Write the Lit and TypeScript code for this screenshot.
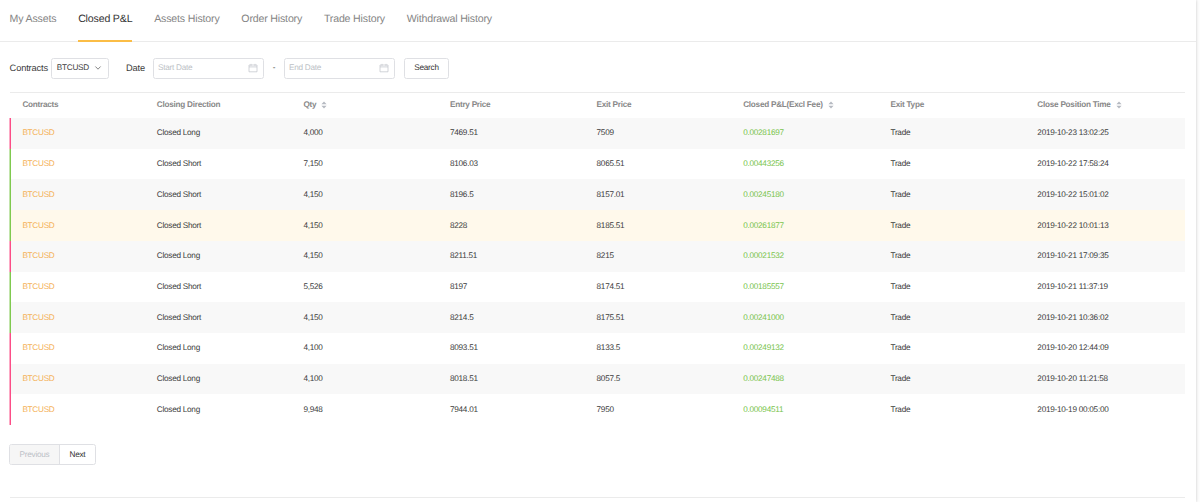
import { LitElement, html, css, svg } from "lit";
import { customElement } from "lit/decorators.js";
import { classMap } from "lit/directives/class-map.js";

interface Trade {
  side: "Long" | "Short";
  qty: string;
  entry: string;
  exit: string;
  pnl: string;
  time: string;
}

const trades: Trade[] = [
  { side: "Long", qty: "4,000", entry: "7469.51", exit: "7509", pnl: "0.00281697", time: "2019-10-23 13:02:25" },
  { side: "Short", qty: "7,150", entry: "8106.03", exit: "8065.51", pnl: "0.00443256", time: "2019-10-22 17:58:24" },
  { side: "Short", qty: "4,150", entry: "8196.5", exit: "8157.01", pnl: "0.00245180", time: "2019-10-22 15:01:02" },
  { side: "Short", qty: "4,150", entry: "8228", exit: "8185.51", pnl: "0.00261877", time: "2019-10-22 10:01:13" },
  { side: "Long", qty: "4,150", entry: "8211.51", exit: "8215", pnl: "0.00021532", time: "2019-10-21 17:09:35" },
  { side: "Short", qty: "5,526", entry: "8197", exit: "8174.51", pnl: "0.00185557", time: "2019-10-21 11:37:19" },
  { side: "Short", qty: "4,150", entry: "8214.5", exit: "8175.51", pnl: "0.00241000", time: "2019-10-21 10:36:02" },
  { side: "Long", qty: "4,100", entry: "8093.51", exit: "8133.5", pnl: "0.00249132", time: "2019-10-20 12:44:09" },
  { side: "Long", qty: "4,100", entry: "8018.51", exit: "8057.5", pnl: "0.00247488", time: "2019-10-20 11:21:58" },
  { side: "Long", qty: "9,948", entry: "7944.01", exit: "7950", pnl: "0.00094511", time: "2019-10-19 00:05:00" },
];

const tabs = ["My Assets", "Closed P&L", "Assets History", "Order History", "Trade History", "Withdrawal History"];

const columns = [
  { label: "Contracts" },
  { label: "Closing Direction" },
  { label: "Qty", sortable: true },
  { label: "Entry Price" },
  { label: "Exit Price" },
  { label: "Closed P&L(Excl Fee)", sortable: true },
  { label: "Exit Type" },
  { label: "Close Position Time", sortable: true },
];

const calendar = html`<svg class="calendar" viewBox="0 0 10 10">
  ${svg`<path d="M1 2H9V8.8H1ZM1 3.9H9M3 0.9V2.8M7 0.9V2.8" fill="none" stroke="#c3c6cc" stroke-width="0.75"/>`}
</svg>`;

const sorter = html`<svg class="sorter" viewBox="0 0 6 8">
  ${svg`<path d="M0.4 3.2L3 0.5L5.6 3.2ZM0.4 4.8L3 7.5L5.6 4.8Z" fill="#b6bac2"/>`}
</svg>`;

@customElement("app-root")
export class AppRoot extends LitElement {
  static styles = css`
    :host {
      display: block;
      width: 1200px;
      height: 502px;
      overflow: hidden;
      background: #fdfdfd;
      font: 8.2px/12px "Liberation Sans", Arial, sans-serif;
      letter-spacing: -0.255px;
      color: #3c3c3c;
      text-rendering: geometricPrecision;
    }
    * { box-sizing: border-box; }
    .page {
      width: 1196px;
      height: 502px;
      background: #fff;
      box-shadow: 0 0 3px rgba(0, 0, 0, 0.22);
    }
    .tabs {
      display: flex;
      gap: 21.8px;
      height: 42px;
      padding-left: 9.6px;
      border-bottom: 1px solid #ebebeb;
      font-size: 10.6px;
      letter-spacing: -0.17px;
      color: #858585;
    }
    .tab {
      height: 42px;
      line-height: 39px;
      white-space: nowrap;
    }
    .tab.active {
      color: #333;
      border-bottom: 2px solid #fbbd46;
    }
    .content {
      padding: 15.5px 11px 0 9.6px;
    }
    .filters {
      display: flex;
      align-items: center;
      height: 21px;
    }
    .label { font-size: 9.3px; letter-spacing: -0.16px; }
    .contracts { width: 41.4px; }
    .date { margin-left: 17px; width: 27px; }
    .control {
      display: flex;
      align-items: center;
      justify-content: space-between;
      height: 21px;
      padding: 0 4.8px;
      border: 1px solid #dfe0e4;
      border-radius: 2.5px;
      background: #fff;
    }
    .select { width: 58px; padding-right: 6px; }
    .chevron { width: 8px; height: 6px; }
    .input { width: 111px; color: #bcbfc6; padding-left: 4px; }
    .calendar { width: 10px; height: 10px; }
    .dash { width: 20px; text-align: center; }
    .button { width: 45px; margin-left: 9px; justify-content: center; color: #333; }
    .table {
      margin-top: 13px;
      border-top: 1px solid #ebebeb;
    }
    .row {
      display: grid;
      grid-template-columns: 134.4px repeat(4, 146.6px) 147.3px 146.9px 1fr;
      align-items: center;
      height: 30.72px;
      padding-left: 11.8px;
      border-left: 1px solid #fc4d87;
      box-shadow: -1px 0 #fda9c5;
      white-space: nowrap;
    }
    .row.short { border-left-color: #7fc94f; box-shadow: -1px 0 #c2e5ab; }
    .row.striped { background: #f8f8f8; }
    .row.hovered { background: #fff9eb; }
    .row.head {
      height: 25.5px;
      border-left-color: transparent;
      box-shadow: none;
      font-weight: bold;
      color: #888;
    }
    .heading { display: flex; align-items: center; gap: 5px; }
    .sorter { width: 6px; height: 8px; }
    .contract { color: #f4b056; }
    .profit { color: #78c44c; }
    .pager {
      display: flex;
      width: 87px;
      height: 21px;
      margin-top: 18.7px;
      margin-left: -0.6px;
      border: 1px solid #dfe0e4;
      border-radius: 2.5px;
      line-height: 19px;
      text-align: center;
      overflow: hidden;
    }
    .previous {
      width: 50px;
      color: #bcbfc6;
      background: #f6f6f6;
      border-right: 1px solid #dfe0e4;
    }
    .next { flex: 1; color: #333; }
    .rule { height: 1px; margin-top: 32px; background: #ebebeb; }
  `;

  render() {
    return html`
      <main class="page">
        <nav class="tabs">
          ${tabs.map((t, i) => html`<span class=${classMap({ tab: true, active: i === 1 })}>${t}</span>`)}
        </nav>
        <section class="content">
          <div class="filters">
            <span class="label contracts">Contracts</span>
            <div class="control select">
              <span>BTCUSD</span>
              <svg class="chevron" viewBox="0 0 8 6">
                <path d="M1.4 1.5L4 4.2L6.6 1.5" fill="none" stroke="#777" stroke-width="0.9" />
              </svg>
            </div>
            <span class="label date">Date</span>
            <div class="control input"><span>Start Date</span>${calendar}</div>
            <span class="dash">-</span>
            <div class="control input"><span>End Date</span>${calendar}</div>
            <div class="control button">Search</div>
          </div>
          <div class="table">
            <div class="row head">
              ${columns.map((c) => html`<span class="heading"><span>${c.label}</span>${c.sortable ? sorter : ""}</span>`)}
            </div>
            ${trades.map(
              (t, i) => html`<div
                class=${classMap({ row: true, short: t.side === "Short", striped: i % 2 === 0, hovered: i === 3 })}
              >
                <span class="contract">BTCUSD</span>
                <span>Closed ${t.side}</span>
                <span>${t.qty}</span>
                <span>${t.entry}</span>
                <span>${t.exit}</span>
                <span class="profit">${t.pnl}</span>
                <span>Trade</span>
                <span>${t.time}</span>
              </div>`
            )}
          </div>
          <div class="pager"><span class="previous">Previous</span><span class="next">Next</span></div>
          <div class="rule"></div>
        </section>
      </main>
    `;
  }
}
